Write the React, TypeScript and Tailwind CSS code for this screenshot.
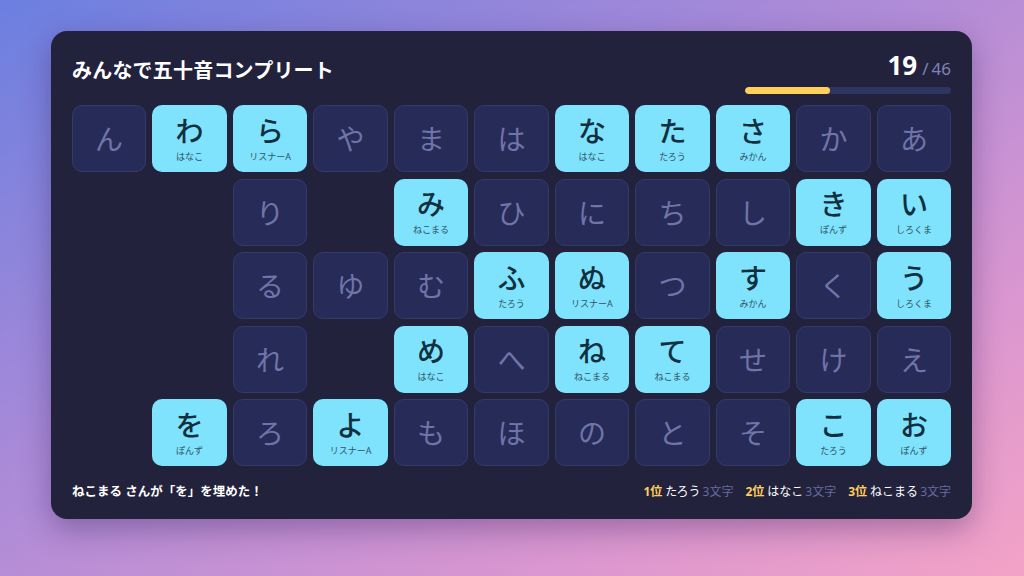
import React from "react";

type Cell = { kana: string; name?: string } | null;

const rows: Cell[][] = [
  [
    { kana: "ん" },
    { kana: "わ", name: "はなこ" },
    { kana: "ら", name: "リスナーA" },
    { kana: "や" },
    { kana: "ま" },
    { kana: "は" },
    { kana: "な", name: "はなこ" },
    { kana: "た", name: "たろう" },
    { kana: "さ", name: "みかん" },
    { kana: "か" },
    { kana: "あ" },
  ],
  [
    null,
    null,
    { kana: "り" },
    null,
    { kana: "み", name: "ねこまる" },
    { kana: "ひ" },
    { kana: "に" },
    { kana: "ち" },
    { kana: "し" },
    { kana: "き", name: "ぽんず" },
    { kana: "い", name: "しろくま" },
  ],
  [
    null,
    null,
    { kana: "る" },
    { kana: "ゆ" },
    { kana: "む" },
    { kana: "ふ", name: "たろう" },
    { kana: "ぬ", name: "リスナーA" },
    { kana: "つ" },
    { kana: "す", name: "みかん" },
    { kana: "く" },
    { kana: "う", name: "しろくま" },
  ],
  [
    null,
    null,
    { kana: "れ" },
    null,
    { kana: "め", name: "はなこ" },
    { kana: "へ" },
    { kana: "ね", name: "ねこまる" },
    { kana: "て", name: "ねこまる" },
    { kana: "せ" },
    { kana: "け" },
    { kana: "え" },
  ],
  [
    null,
    { kana: "を", name: "ぽんず" },
    { kana: "ろ" },
    { kana: "よ", name: "リスナーA" },
    { kana: "も" },
    { kana: "ほ" },
    { kana: "の" },
    { kana: "と" },
    { kana: "そ" },
    { kana: "こ", name: "たろう" },
    { kana: "お", name: "ぽんず" },
  ],
];

const ranking = [
  { rank: "1位", name: "たろう", count: "3文字" },
  { rank: "2位", name: "はなこ", count: "3文字" },
  { rank: "3位", name: "ねこまる", count: "3文字" },
];

const Tile = ({ cell }: { cell: Cell }) => {
  if (!cell) return <div className="h-[67px]" />;
  if (cell.name) {
    return (
      <div className="h-[67px] rounded-[10px] bg-[#80e3fd] flex flex-col items-center justify-center">
        <span className="text-[28px] leading-[30px] font-medium text-[#10303f] mt-[1px]">
          {cell.kana}
        </span>
        <span className="text-[9px] leading-[12px] text-[#2f5566] mt-[5px]">
          {cell.name}
        </span>
      </div>
    );
  }
  return (
    <div className="h-[67px] rounded-[10px] bg-[#272b58] border border-[#343a6c] flex items-center justify-center">
      <span className="text-[28px] leading-none text-[#6f74a9] mt-[1px]">
        {cell.kana}
      </span>
    </div>
  );
};

export default function App() {
  const done = 19;
  const total = 46;

  return (
    <div
      className="w-[1024px] h-[576px] overflow-hidden bg-[linear-gradient(150deg,#6b7fe0_0%,#a98ad8_40%,#d996d0_75%,#f3a2c6_100%)] pt-[31px] pl-[51px]"
      style={{ fontFamily: '"Noto Sans", "Noto Sans CJK JP", sans-serif' }}
    >
      <div className="w-[921px] h-[488px] rounded-[16px] bg-[#22223d] shadow-[0_10px_30px_rgba(40,20,80,0.35)] px-[21px] flex flex-col">
        <div className="h-[74px] flex justify-between items-start">
          <h1 className="mt-[26px] text-[20px] leading-[28px] font-bold text-white tracking-[0.2px]">
            みんなで五十音コンプリート
          </h1>
          <div className="flex flex-col items-end pt-[21px]">
            <div className="flex items-baseline h-[26px] leading-[26px] text-white">
              <span className="text-[26px] font-bold">{done}</span>
              <span className="text-[17px] text-[#7f83b8] ml-[5px]">/</span>
              <span className="text-[17px] text-[#7f83b8] ml-[3px]">{total}</span>
            </div>
            <div className="mt-[9px] w-[206px] h-[7px] rounded-full bg-[#2e3563] overflow-hidden">
              <div
                className="h-full rounded-full bg-[#ffcf5c]"
                style={{ width: `${(done / total) * 100}%` }}
              />
            </div>
          </div>
        </div>

        <div className="grid grid-cols-11 gap-x-[6.4px] gap-y-[6.5px]">
          {rows.flat().map((cell, i) => (
            <Tile key={i} cell={cell} />
          ))}
        </div>

        <div className="flex-1 flex items-center justify-between pb-[1px]">
          <p className="text-[12.5px] font-bold text-white">
            ねこまる さんが「を」を埋めた！
          </p>
          <div className="flex items-center gap-[12px] text-[12px]">
            {ranking.map((r) => (
              <div key={r.rank} className="flex items-center">
                <span className="font-bold text-[#ffcf5c]">{r.rank}</span>
                <span className="text-white ml-[3px]">{r.name}</span>
                <span className="text-[#666b9e] ml-[2px]">{r.count}</span>
              </div>
            ))}
          </div>
        </div>
      </div>
    </div>
  );
}
